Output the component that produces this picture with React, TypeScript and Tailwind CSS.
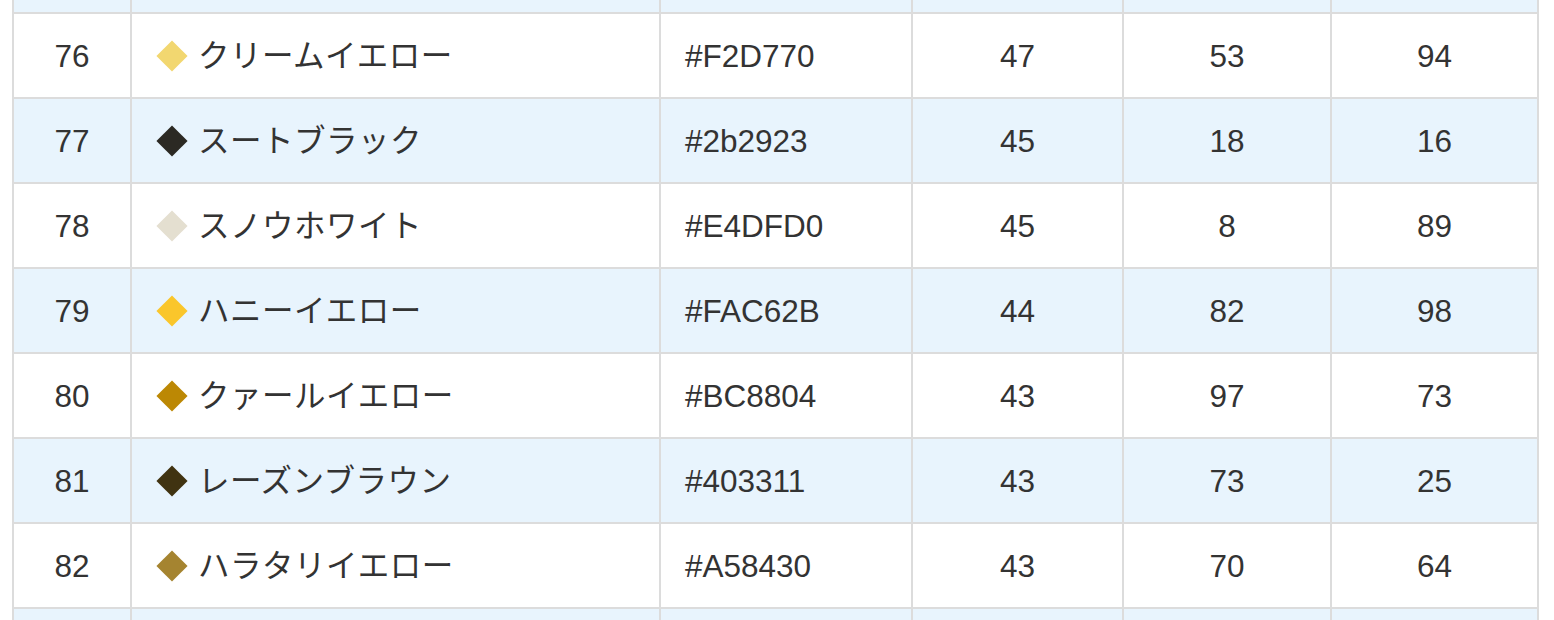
import React from 'react';

const rows = [
  { no: 76, name: 'クリームイエロー', hex: '#F2D770', h: 47, s: 53, v: 94 },
  { no: 77, name: 'スートブラック', hex: '#2b2923', h: 45, s: 18, v: 16 },
  { no: 78, name: 'スノウホワイト', hex: '#E4DFD0', h: 45, s: 8, v: 89 },
  { no: 79, name: 'ハニーイエロー', hex: '#FAC62B', h: 44, s: 82, v: 98 },
  { no: 80, name: 'クァールイエロー', hex: '#BC8804', h: 43, s: 97, v: 73 },
  { no: 81, name: 'レーズンブラウン', hex: '#403311', h: 43, s: 73, v: 25 },
  { no: 82, name: 'ハラタリイエロー', hex: '#A58430', h: 43, s: 70, v: 64 },
];

const font = { fontFamily: '"Liberation Sans", "Noto Sans CJK JP", sans-serif' };

const App = () => {
  return (
    <div className="w-[1554px] h-[620px] overflow-hidden bg-white text-[#333] text-[31.5px]" style={font}>
      <div className="ml-[12px] w-[1527px] bg-[#dcdcdc] px-[2px]">
        <div className="grid grid-cols-[116px_527px_250px_209px_206px_205px] gap-[2px]">
          {/* row 75, scrolled almost out of view */}
          {[0, 1, 2, 3, 4, 5].map((i) => (
            <div key={i} className="h-[12px] bg-[#e8f4fd]" />
          ))}

          {rows.map((r, idx) => {
            const bg = idx % 2 === 0 ? 'bg-white' : 'bg-[#e8f4fd]';
            return (
              <React.Fragment key={r.no}>
                <div className={`${bg} h-[83px] pt-[2px] flex items-center justify-center`}>{r.no}</div>
                <div className={`${bg} h-[83px] flex items-center pl-[24px]`}>
                  <span
                    className="ml-[4.5px] w-[22px] h-[22px] rotate-45 shrink-0"
                    style={{ backgroundColor: r.hex }}
                  />
                  <span className="ml-[15.5px] pt-[2px] whitespace-nowrap tracking-[0.5px]">{r.name}</span>
                </div>
                <div className={`${bg} h-[83px] pt-[2px] flex items-center pl-[24px]`}>{r.hex}</div>
                <div className={`${bg} h-[83px] pt-[2px] flex items-center justify-center`}>{r.h}</div>
                <div className={`${bg} h-[83px] pt-[2px] flex items-center justify-center`}>{r.s}</div>
                <div className={`${bg} h-[83px] pt-[2px] flex items-center justify-center`}>{r.v}</div>
              </React.Fragment>
            );
          })}

          {/* row 83, only its top shows */}
          {[0, 1, 2, 3, 4, 5].map((i) => (
            <div key={`b${i}`} className="h-[83px] bg-[#e8f4fd]" />
          ))}
        </div>
      </div>
    </div>
  );
};

export default App;
